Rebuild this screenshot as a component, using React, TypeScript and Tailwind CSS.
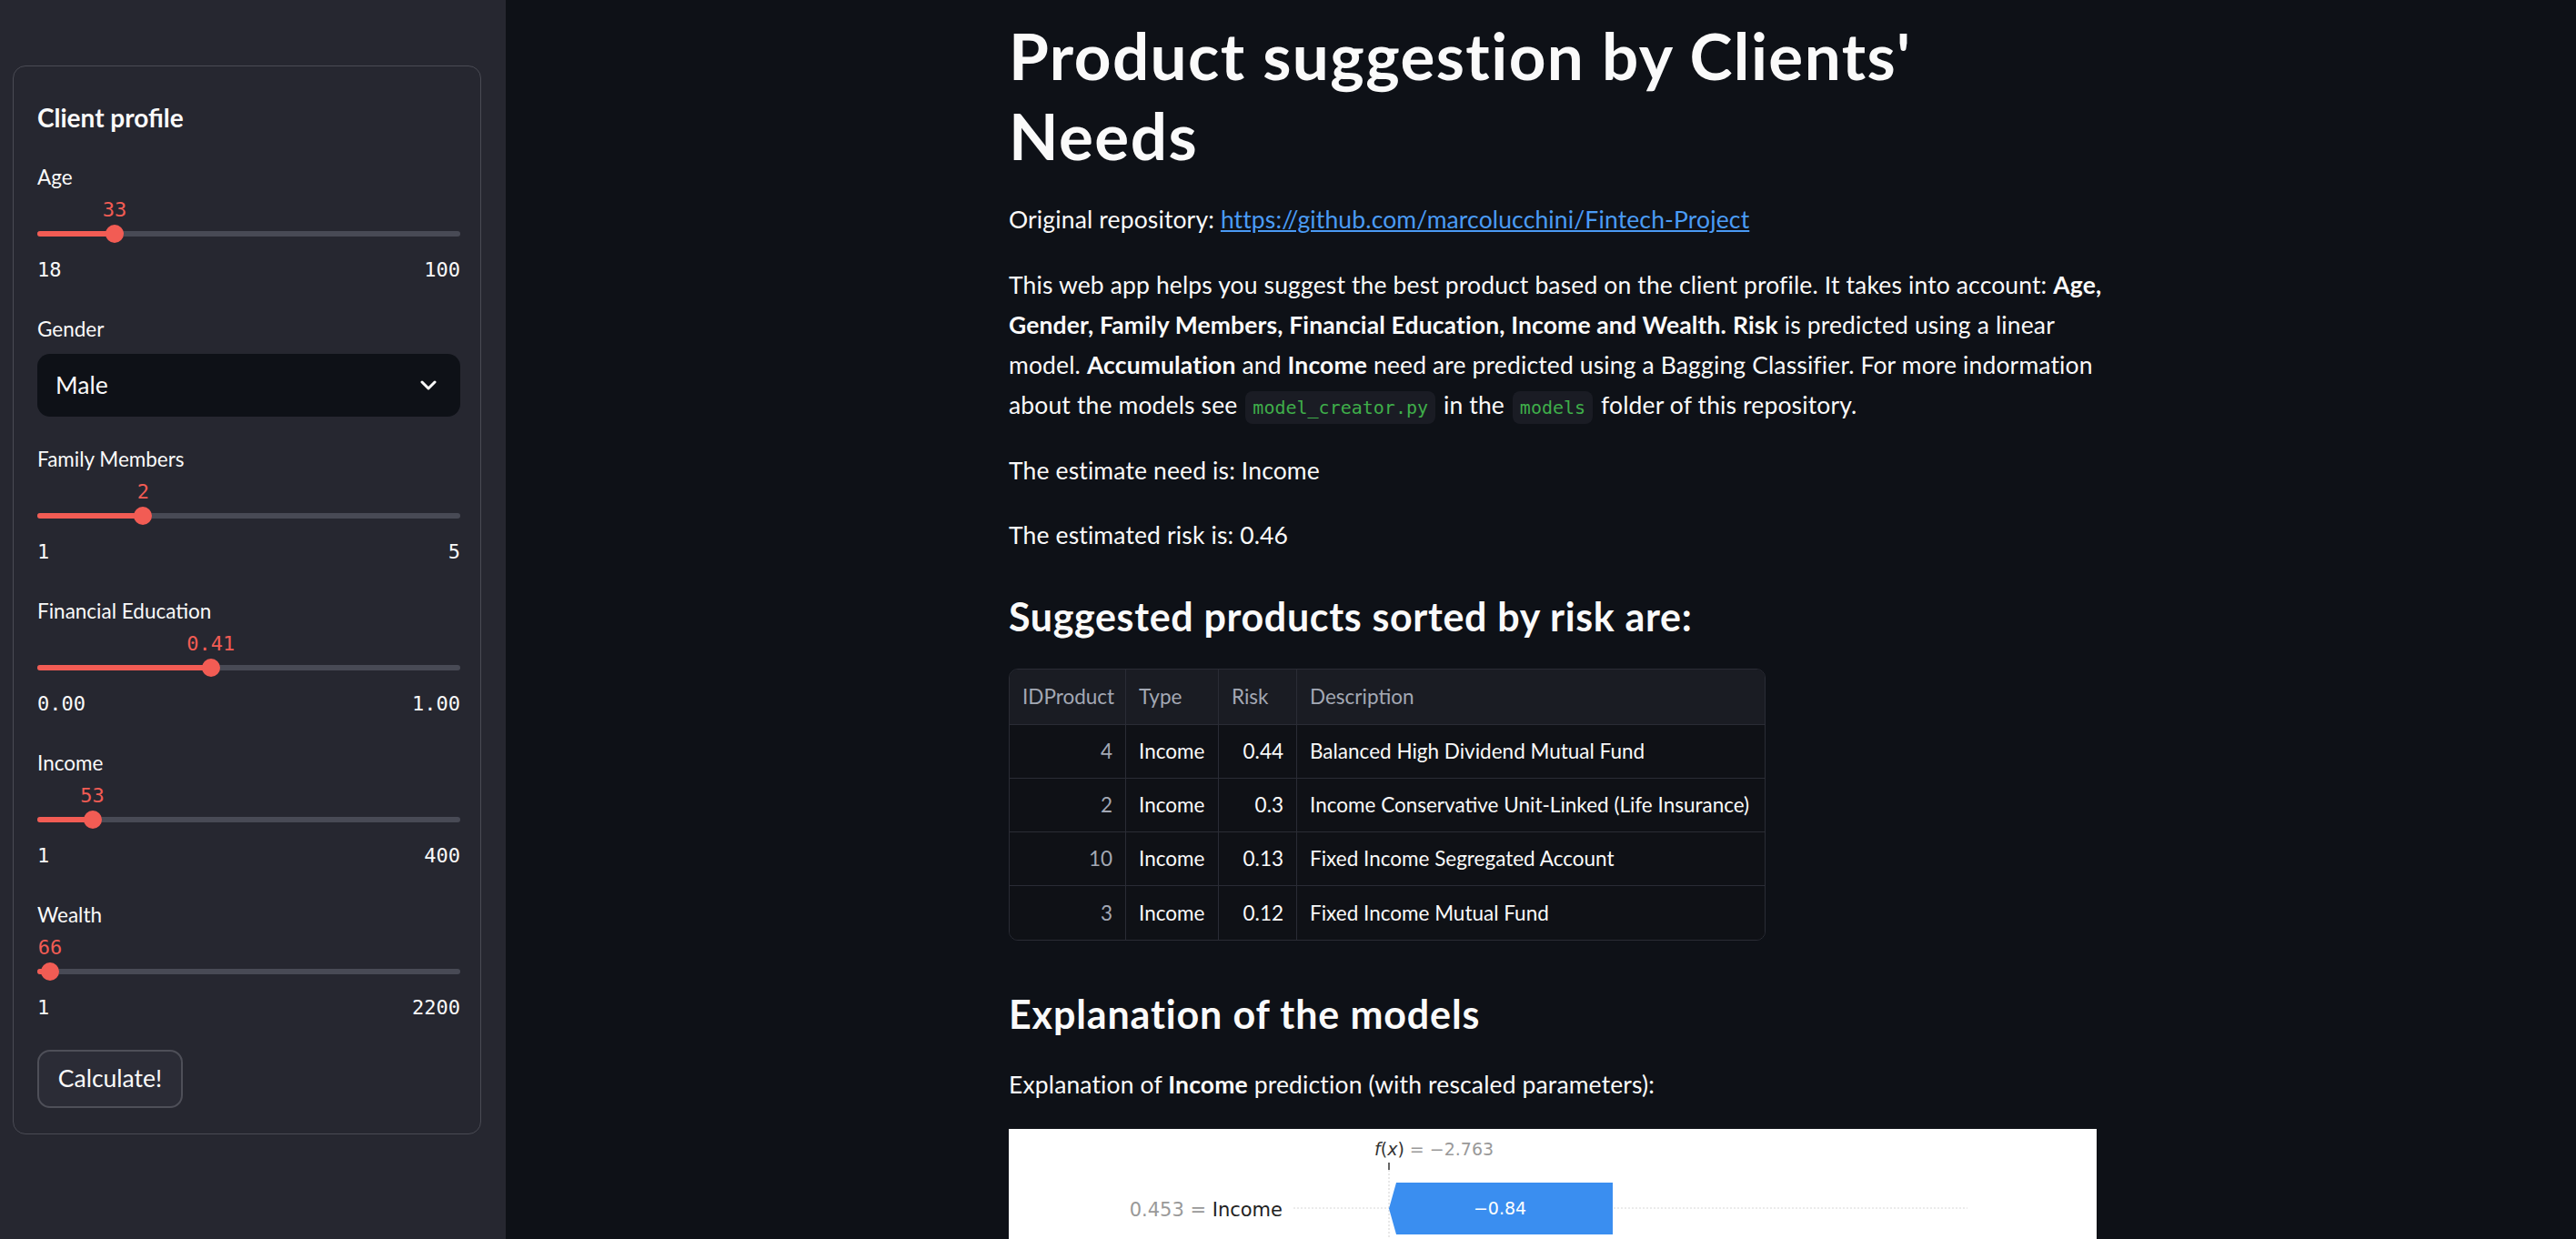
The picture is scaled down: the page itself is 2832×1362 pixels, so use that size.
import React from "react";

const sans = "font-['Lato',sans-serif]";
const mono = "font-['DejaVu_Sans_Mono',monospace]";

type SliderProps = {
    label: string;
    value: number;
    min: number;
    max: number;
    display: string;
    minLabel: string;
    maxLabel: string;
};

function Slider({ label, value, min, max, display, minLabel, maxLabel }: SliderProps) {
    const pct = ((value - min) / (max - min)) * 100;
    return (
        <div className="flex flex-col">
            <div className="h-[32px] text-[22.5px] leading-[32px] text-[#fafafa]">{label}</div>
            <div className="relative h-[72px]">
                <div
                    className={`absolute top-[8px] -translate-x-1/2 text-[22px] leading-[24px] text-[#f25c54] ${mono}`}
                    style={{ left: `max(${pct}%, 14px)` }}
                >
                    {display}
                </div>
                <div className="absolute left-0 right-0 top-[43px] h-[6px] rounded-full bg-[#484a55]" />
                <div
                    className="absolute left-0 top-[43px] h-[6px] rounded-full bg-[#f25c54]"
                    style={{ width: `${pct}%` }}
                />
                <div
                    className="absolute top-[36px] h-[20px] w-[20px] -translate-x-1/2 rounded-full bg-[#f25c54]"
                    style={{ left: `${pct}%` }}
                />
            </div>
            <div className={`mt-[2px] flex h-[24px] justify-between text-[22px] leading-[24px] text-[#fafafa] ${mono}`}>
                <span>{minLabel}</span>
                <span>{maxLabel}</span>
            </div>
        </div>
    );
}

const products = [
    { id: 4, type: "Income", risk: "0.44", desc: "Balanced High Dividend Mutual Fund" },
    { id: 2, type: "Income", risk: "0.3", desc: "Income Conservative Unit-Linked (Life Insurance)" },
    { id: 10, type: "Income", risk: "0.13", desc: "Fixed Income Segregated Account" },
    { id: 3, type: "Income", risk: "0.12", desc: "Fixed Income Mutual Fund" },
];

function Code({ children }: { children: React.ReactNode }) {
    return (
        <span className={`mx-[2px] rounded-[8px] bg-[#1a1c24] px-[8px] py-[6px] text-[20px] leading-none tracking-normal text-[#3fae4a] ${mono}`}>
            {children}
        </span>
    );
}

function WaterfallChart() {
    return (
        <div className="h-[300px] w-[1196px] bg-white">
            <svg width="1196" height="300" viewBox="0 0 1196 300">
                <text x="402" y="29" fontFamily="DejaVu Sans, sans-serif" fontSize="19" fill="#333">
                    <tspan fontStyle="italic">f</tspan>
                    <tspan>(</tspan>
                    <tspan fontStyle="italic">x</tspan>
                    <tspan>)</tspan>
                    <tspan fill="#999"> = −2.763</tspan>
                </text>
                <line x1="418" y1="37" x2="418" y2="45" stroke="#333" strokeWidth="1.5" />
                <line x1="418" y1="45" x2="418" y2="300" stroke="#d0d0d0" strokeWidth="1" strokeDasharray="2 2" />
                <line x1="313" y1="87" x2="1054" y2="87" stroke="#d8d8d8" strokeWidth="1" strokeDasharray="2 2" />
                <polygon points="426,59 664,59 664,116 426,116 418,87.5" fill="#3a8ef0" />
                <text x="540" y="94" textAnchor="middle" fontFamily="DejaVu Sans, sans-serif" fontSize="19" fill="#fff">
                    −0.84
                </text>
                <text x="301" y="96" textAnchor="end" fontFamily="DejaVu Sans, sans-serif" fontSize="21">
                    <tspan fill="#999">0.453 = </tspan>
                    <tspan fill="#222">Income</tspan>
                </text>
            </svg>
        </div>
    );
}

export default function App() {
    return (
        <div className={`flex h-[1362px] w-full overflow-hidden bg-[#0e1117] text-[#fafafa] ${sans}`}>
            {/* Sidebar */}
            <aside className="h-full w-[556px] shrink-0 bg-[#262730] pt-[72px] pl-[14px]">
                <div className="flex w-[515px] flex-col rounded-[14px] border border-[#4a4b54] pt-[36px] pr-[22px] pb-[28px] pl-[26px]">
                    <div className="h-[40px] text-[28px] font-bold leading-[40px]">Client profile</div>

                    <div className="mt-[30px]">
                        <Slider label="Age" value={33} min={18} max={100} display="33" minLabel="18" maxLabel="100" />
                    </div>

                    <div className="mt-[37px] flex flex-col">
                        <div className="h-[32px] text-[22.5px] leading-[32px]">Gender</div>
                        <div className="mt-[11px] flex h-[69px] items-center justify-between rounded-[14px] bg-[#0e1117] pr-[26px] pl-[20px]">
                            <span className="text-[26.5px]">Male</span>
                            <svg width="18" height="11" viewBox="0 0 18 11">
                                <polyline points="2,2 9,9 16,2" fill="none" stroke="#fafafa" strokeWidth="3" strokeLinecap="round" strokeLinejoin="round" />
                            </svg>
                        </div>
                    </div>

                    <div className="mt-[31px]">
                        <Slider label="Family Members" value={2} min={1} max={5} display="2" minLabel="1" maxLabel="5" />
                    </div>
                    <div className="mt-[37px]">
                        <Slider label="Financial Education" value={0.41} min={0} max={1} display="0.41" minLabel="0.00" maxLabel="1.00" />
                    </div>
                    <div className="mt-[37px]">
                        <Slider label="Income" value={53} min={1} max={400} display="53" minLabel="1" maxLabel="400" />
                    </div>
                    <div className="mt-[37px]">
                        <Slider label="Wealth" value={66} min={1} max={2200} display="66" minLabel="1" maxLabel="2200" />
                    </div>

                    <button className="mt-[34px] flex h-[64px] w-[160px] items-center justify-center rounded-[14px] border-2 border-[#4e4f58] bg-[#2b2c36] text-[26.5px] text-[#fafafa]">
                        Calculate!
                    </button>
                </div>
            </aside>

            {/* Main */}
            <main className="h-full flex-1 overflow-hidden">
                <div className="ml-[553px] flex w-[1196px] flex-col pt-[17px]">
                    <h1 className="text-[71px] font-bold leading-[88px] tracking-[0.02em]">
                        Product suggestion by Clients'
                        <br />
                        Needs
                    </h1>

                    <p className="mt-[26px] text-[26.5px] leading-[44px] tracking-[0.005em]">
                        Original repository:{" "}
                        <a href="#" className="text-[#4a9bf5] underline">
                            https://github.com/marcolucchini/Fintech-Project
                        </a>
                    </p>

                    <p className="mt-[28px] whitespace-nowrap text-[26.5px] leading-[44px] tracking-[0.005em]">
                        This web app helps you suggest the best product based on the client profile. It takes into account: <b>Age,</b>
                        <br />
                        <b>Gender, Family Members, Financial Education, Income and Wealth.</b> <b>Risk</b> is predicted using a linear
                        <br />
                        model. <b>Accumulation</b> and <b>Income</b> need are predicted using a Bagging Classifier. For more indormation
                        <br />
                        about the models see <Code>model_creator.py</Code> in the <Code>models</Code> folder of this repository.
                    </p>

                    <p className="mt-[28px] text-[26.5px] leading-[44px] tracking-[0.005em]">The estimate need is: Income</p>
                    <p className="mt-[27px] text-[26.5px] leading-[44px] tracking-[0.005em]">The estimated risk is: 0.46</p>

                    <h3 className="mt-[42px] text-[43px] font-bold leading-[52px] tracking-[0.015em]">Suggested products sorted by risk are:</h3>

                    <div className="mt-[31px] w-[832px] overflow-hidden rounded-[10px] border border-[#2a2c35] text-[22.5px]">
                        <div className="grid h-[61px] grid-cols-[128px_102px_86px_514px] border-b border-[#2a2c35] bg-[#1a1c23] text-[#a3a8b4]">
                            <div className="flex items-center border-r border-[#2a2c35] px-[14px]">IDProduct</div>
                            <div className="flex items-center border-r border-[#2a2c35] px-[14px]">Type</div>
                            <div className="flex items-center border-r border-[#2a2c35] px-[14px]">Risk</div>
                            <div className="flex items-center px-[14px]">Description</div>
                        </div>
                        {products.map((p, i) => (
                            <div
                                key={p.id}
                                className={`grid h-[59px] grid-cols-[128px_102px_86px_514px] bg-[#0f1116] ${i < products.length - 1 ? "border-b border-[#2a2c35]" : ""}`}
                            >
                                <div className="flex items-center justify-end border-r border-[#2a2c35] px-[14px] text-[#a3a8b4]">{p.id}</div>
                                <div className="flex items-center border-r border-[#2a2c35] px-[14px]">{p.type}</div>
                                <div className="flex items-center justify-end border-r border-[#2a2c35] px-[14px]">{p.risk}</div>
                                <div className="flex items-center whitespace-nowrap px-[14px]">{p.desc}</div>
                            </div>
                        ))}
                    </div>

                    <h3 className="mt-[55px] text-[43px] font-bold leading-[52px] tracking-[0.02em]">Explanation of the models</h3>

                    <p className="mt-[29px] text-[26.5px] leading-[44px] tracking-[0.005em]">
                        Explanation of <b>Income</b> prediction (with rescaled parameters):
                    </p>

                    <div className="mt-[27px]">
                        <WaterfallChart />
                    </div>
                </div>
            </main>
        </div>
    );
}
